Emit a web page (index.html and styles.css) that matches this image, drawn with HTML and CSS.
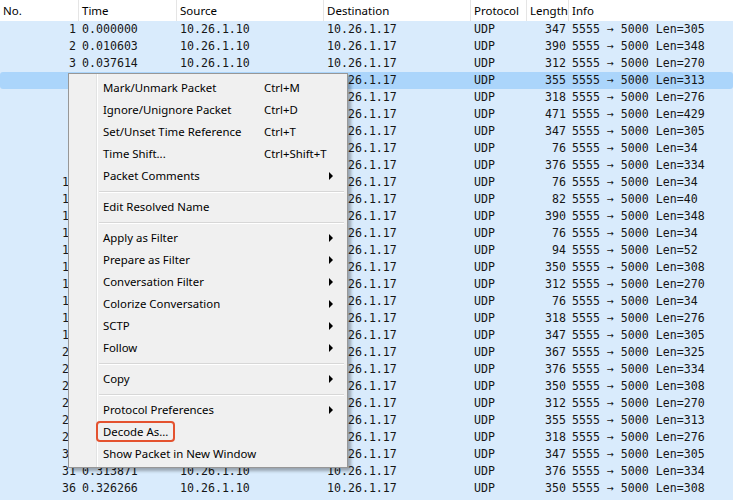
FILE: index.html
```html
<!DOCTYPE html>
<html>
<head>
<meta charset="utf-8">
<link rel="stylesheet" href="styles.css">
</head>
<body>
<div class="list">
  <div class="head"><span>No.</span><span>Time</span><span>Source</span><span>Destination</span><span>Protocol</span><span>Length</span><span>Info</span></div>
  <div class="row"><span class="no">1</span><span>0.000000</span><span>10.26.1.10</span><span>10.26.1.17</span><span>UDP</span><span class="len">347</span><span>5555 → 5000 Len=305</span></div>
  <div class="row"><span class="no">2</span><span>0.010603</span><span>10.26.1.10</span><span>10.26.1.17</span><span>UDP</span><span class="len">390</span><span>5555 → 5000 Len=348</span></div>
  <div class="row"><span class="no">3</span><span>0.037614</span><span>10.26.1.10</span><span>10.26.1.17</span><span>UDP</span><span class="len">312</span><span>5555 → 5000 Len=270</span></div>
  <div class="row sel"><span class="no"></span><span></span><span></span><span>10.26.1.17</span><span>UDP</span><span class="len">355</span><span>5555 → 5000 Len=313</span></div>
  <div class="row"><span class="no"></span><span></span><span></span><span>10.26.1.17</span><span>UDP</span><span class="len">318</span><span>5555 → 5000 Len=276</span></div>
  <div class="row"><span class="no"></span><span></span><span></span><span>10.26.1.17</span><span>UDP</span><span class="len">471</span><span>5555 → 5000 Len=429</span></div>
  <div class="row"><span class="no"></span><span></span><span></span><span>10.26.1.17</span><span>UDP</span><span class="len">347</span><span>5555 → 5000 Len=305</span></div>
  <div class="row"><span class="no"></span><span></span><span></span><span>10.26.1.17</span><span>UDP</span><span class="len">76</span><span>5555 → 5000 Len=34</span></div>
  <div class="row"><span class="no"></span><span></span><span></span><span>10.26.1.17</span><span>UDP</span><span class="len">376</span><span>5555 → 5000 Len=334</span></div>
  <div class="row"><span class="no">10</span><span></span><span></span><span>10.26.1.17</span><span>UDP</span><span class="len">76</span><span>5555 → 5000 Len=34</span></div>
  <div class="row"><span class="no">11</span><span></span><span></span><span>10.26.1.17</span><span>UDP</span><span class="len">82</span><span>5555 → 5000 Len=40</span></div>
  <div class="row"><span class="no">12</span><span></span><span></span><span>10.26.1.17</span><span>UDP</span><span class="len">390</span><span>5555 → 5000 Len=348</span></div>
  <div class="row"><span class="no">13</span><span></span><span></span><span>10.26.1.17</span><span>UDP</span><span class="len">76</span><span>5555 → 5000 Len=34</span></div>
  <div class="row"><span class="no">14</span><span></span><span></span><span>10.26.1.17</span><span>UDP</span><span class="len">94</span><span>5555 → 5000 Len=52</span></div>
  <div class="row"><span class="no">15</span><span></span><span></span><span>10.26.1.17</span><span>UDP</span><span class="len">350</span><span>5555 → 5000 Len=308</span></div>
  <div class="row"><span class="no">16</span><span></span><span></span><span>10.26.1.17</span><span>UDP</span><span class="len">312</span><span>5555 → 5000 Len=270</span></div>
  <div class="row"><span class="no">17</span><span></span><span></span><span>10.26.1.17</span><span>UDP</span><span class="len">76</span><span>5555 → 5000 Len=34</span></div>
  <div class="row"><span class="no">18</span><span></span><span></span><span>10.26.1.17</span><span>UDP</span><span class="len">318</span><span>5555 → 5000 Len=276</span></div>
  <div class="row"><span class="no">19</span><span></span><span></span><span>10.26.1.17</span><span>UDP</span><span class="len">347</span><span>5555 → 5000 Len=305</span></div>
  <div class="row"><span class="no">20</span><span></span><span></span><span>10.26.1.17</span><span>UDP</span><span class="len">367</span><span>5555 → 5000 Len=325</span></div>
  <div class="row"><span class="no">22</span><span></span><span></span><span>10.26.1.17</span><span>UDP</span><span class="len">376</span><span>5555 → 5000 Len=334</span></div>
  <div class="row"><span class="no">24</span><span></span><span></span><span>10.26.1.17</span><span>UDP</span><span class="len">350</span><span>5555 → 5000 Len=308</span></div>
  <div class="row"><span class="no">25</span><span></span><span></span><span>10.26.1.17</span><span>UDP</span><span class="len">312</span><span>5555 → 5000 Len=270</span></div>
  <div class="row"><span class="no">27</span><span></span><span></span><span>10.26.1.17</span><span>UDP</span><span class="len">355</span><span>5555 → 5000 Len=313</span></div>
  <div class="row"><span class="no">28</span><span></span><span></span><span>10.26.1.17</span><span>UDP</span><span class="len">318</span><span>5555 → 5000 Len=276</span></div>
  <div class="row"><span class="no">30</span><span></span><span></span><span>10.26.1.17</span><span>UDP</span><span class="len">347</span><span>5555 → 5000 Len=305</span></div>
  <div class="row"><span class="no">31</span><span>0.313871</span><span>10.26.1.10</span><span>10.26.1.17</span><span>UDP</span><span class="len">376</span><span>5555 → 5000 Len=334</span></div>
  <div class="row"><span class="no">36</span><span>0.326266</span><span>10.26.1.10</span><span>10.26.1.17</span><span>UDP</span><span class="len">350</span><span>5555 → 5000 Len=308</span></div>

  <div class="menu">
    <div class="item"><span class="label">Mark/Unmark Packet</span><span class="key">Ctrl+M</span></div>
    <div class="item"><span class="label">Ignore/Unignore Packet</span><span class="key">Ctrl+D</span></div>
    <div class="item"><span class="label">Set/Unset Time Reference</span><span class="key">Ctrl+T</span></div>
    <div class="item"><span class="label">Time Shift...</span><span class="key">Ctrl+Shift+T</span></div>
    <div class="item"><span class="label">Packet Comments</span><span class="arrow"></span></div>
    <div class="sep"></div>
    <div class="item"><span class="label">Edit Resolved Name</span></div>
    <div class="sep"></div>
    <div class="item"><span class="label">Apply as Filter</span><span class="arrow"></span></div>
    <div class="item"><span class="label">Prepare as Filter</span><span class="arrow"></span></div>
    <div class="item"><span class="label">Conversation Filter</span><span class="arrow"></span></div>
    <div class="item"><span class="label">Colorize Conversation</span><span class="arrow"></span></div>
    <div class="item"><span class="label">SCTP</span><span class="arrow"></span></div>
    <div class="item"><span class="label">Follow</span><span class="arrow"></span></div>
    <div class="sep"></div>
    <div class="item"><span class="label">Copy</span><span class="arrow"></span></div>
    <div class="sep"></div>
    <div class="item"><span class="label">Protocol Preferences</span><span class="arrow"></span></div>
    <div class="item"><span class="label"><span class="mark">Decode As...</span></span></div>
    <div class="item"><span class="label">Show Packet in New Window</span></div>
  </div>
</div>
</body>
</html>
```

FILE: styles.css
```css
html, body {
  margin: 0;
  padding: 0;
}
body {
  background: #d9ebfc;
  font-family: "Noto Sans", "Open Sans", sans-serif;
  width: 733px;
  height: 500px;
  overflow: hidden;
}
.list {
  position: relative;
}
.head, .row {
  display: grid;
  grid-template-columns: 79px 98px 147px 147px 56px 42px 1fr;
}
.head {
  height: 21px;
  background: #fff;
  font-size: 11.5px;
  color: #000;
}
.head span {
  border-right: 1px solid #e5e5e5;
  padding-left: 3px;
  line-height: 21px;
  white-space: nowrap;
  overflow: hidden;
}
.head span:last-child {
  border-right: none;
}
.row {
  height: 17px;
  font-family: "DejaVu Sans Mono", "Liberation Mono", monospace;
  font-size: 11.6px;
  line-height: 17px;
  color: #161616;
}
.row span {
  padding-left: 3px;
  white-space: pre;
  overflow: hidden;
}
.row span.no, .row span.len {
  text-align: right;
  padding: 0 3px 0 0;
}
.row.sel {
  background: #abd5fb;
  border-radius: 3px;
}

.menu {
  position: absolute;
  left: 68px;
  top: 73px;
  width: 278px;
  padding: 3px 0 2px;
  border: 1px solid #979797;
  background:
    linear-gradient(to right, transparent 27px, #e2e3e3 27px, #e2e3e3 28px, #ffffff 28px, #ffffff 29px, transparent 29px),
    #f0f0f0;
  box-shadow: 3px 3px 3px rgba(0, 0, 0, 0.3);
  font-size: 11.4px;
  color: #000;
}
.item {
  display: flex;
  align-items: center;
  height: 22px;
  line-height: 22px;
  padding-left: 34px;
  white-space: nowrap;
}
.item .label {
  width: 161px;
  flex: none;
}
.item .key {
  flex: none;
}
.item .arrow {
  margin-left: auto;
  margin-right: 14px;
  width: 0;
  height: 0;
  border-left: 4px solid #000;
  border-top: 4px solid transparent;
  border-bottom: 4px solid transparent;
}
.sep {
  height: 1px;
  background: #d7d7d7;
  box-shadow: 0 1px 0 #ffffff;
  margin: 4px 3px 4px 30px;
}
.mark {
  position: relative;
  display: inline-block;
  height: 22px;
}
.mark::after {
  content: "";
  position: absolute;
  top: 0;
  bottom: 1px;
  left: -7px;
  right: -7px;
  border: 2px solid #e4522f;
  border-radius: 4px;
}
```
